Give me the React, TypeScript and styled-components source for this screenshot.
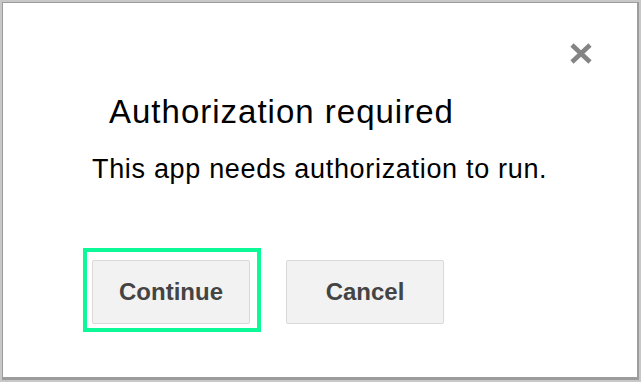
import React from 'react'
import styled, { createGlobalStyle } from 'styled-components'

const GlobalStyle = createGlobalStyle`
  html,
  body {
    background: #c8c8c8;
    margin: 0;
    padding: 0;
  }

  body {
    font-family: 'Liberation Sans', Arial, Helvetica, sans-serif;
    padding: 2px;
  }
`

const Dialog = styled.div`
  background: #fff;
  border-color: #9c9c9c;
  border-style: solid;
  border-width: 1px 2px 3px 1px;
  box-sizing: border-box;
  display: flex;
  flex-direction: column;
  height: 378px;
  padding: 39px 43px 0 80px;
  width: 637px;
`

const CloseButton = styled.button`
  align-self: flex-end;
  background: transparent;
  border: none;
  cursor: pointer;
  display: block;
  height: 23px;
  margin: 0;
  padding: 0;
  width: 26px;

  & svg {
    display: block;
    filter: blur(0.4px);
  }
`

const Title = styled.h2`
  color: #000;
  font-size: 33px;
  font-weight: 400;
  letter-spacing: 1px;
  line-height: 40px;
  margin: 27px 0 0 26px;
  padding: 0;
`

const Message = styled.p`
  color: #000;
  font-size: 27px;
  letter-spacing: 0.68px;
  line-height: 32px;
  margin: 21px 0 0 9px;
  padding: 0;
`

const Actions = styled.div`
  align-items: flex-start;
  display: flex;
  gap: 25px;
  margin-top: 63px;
`

const FocusRing = styled.div`
  border: 4px solid #0bf996;
  padding: 8px 7px 4px 5px;
`

const Button = styled.button<{ offset?: number }>`
  background: #f2f2f2;
  border: 1px solid #d9d9d9;
  border-radius: 2px;
  box-sizing: border-box;
  color: #444;
  cursor: pointer;
  display: block;
  font-family: 'Liberation Sans', Arial, Helvetica, sans-serif;
  font-size: 24px;
  font-weight: 700;
  height: 64px;
  margin: ${({ offset }) => offset ?? 0}px 0 0;
  padding: 0;
  width: 158px;
`

const App: React.FC = () => {
  return (
    <>
      <GlobalStyle />
      <Dialog>
        <CloseButton aria-label="Close">
          <svg width="26" height="23" viewBox="0 0 26 23">
            <path d="M4 3 L22 20 M22 3 L4 20" stroke="#848484" strokeWidth="4.6" fill="none" />
          </svg>
        </CloseButton>
        <Title>Authorization required</Title>
        <Message>This app needs authorization to run.</Message>
        <Actions>
          <FocusRing>
            <Button>Continue</Button>
          </FocusRing>
          <Button offset={12}>Cancel</Button>
        </Actions>
      </Dialog>
    </>
  )
}

export default App
